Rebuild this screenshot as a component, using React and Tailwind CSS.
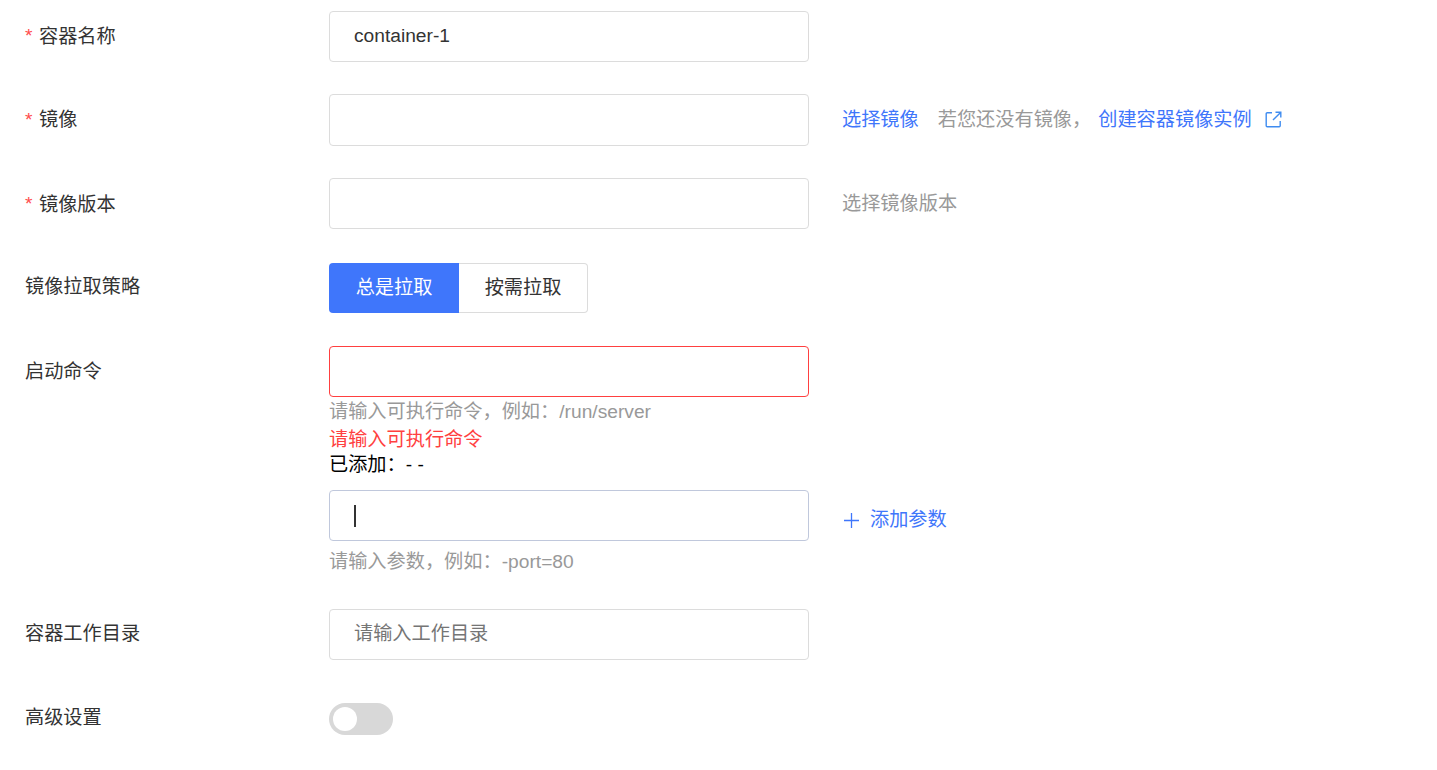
const fontStack = "font-['Liberation_Sans','Noto_Sans_CJK_SC',sans-serif]"

const Label = ({ required, className = "h-[51px] pt-[1px]", children }) => (
    <div className={`w-[304px] shrink-0 flex items-center text-[#333] ${className}`}>
        {required && <span className="w-[14px] text-[#ff4d4d] text-[19.2px] leading-none -mt-[2px]">*</span>}
        {children}
    </div>
)

const TextBox = ({ className = "border-[#dcdcdc] h-[51px]", children }) => (
    <div className={`w-[480px] border rounded-[4px] px-[24px] flex items-center bg-white ${className}`}>
        {children}
    </div>
)

const Hint = ({ className = "text-[#999]", children }) => (
    <div className={`h-[28px] leading-[30px] ${className}`}>{children}</div>
)

const App = () => {
    return (
        <div className={`${fontStack} h-[770px] overflow-hidden bg-white pl-[25px] pt-[11px] text-[19.2px]`}>
            <div className="flex mb-[32px]">
                <Label required>容器名称</Label>
                <TextBox><span className="text-[#333]">container-1</span></TextBox>
            </div>

            <div className="flex mb-[32px]">
                <Label required className="h-[51px] pt-[2px]">镜像</Label>
                <TextBox className="border-[#dcdcdc] h-[52px]" />
                <div className="ml-[33px] h-[52px] flex items-center">
                    <span className="text-[#3f76fb]">选择镜像</span>
                    <span className="ml-[19px] text-[#999]">若您还没有镜像，</span>
                    <span className="ml-[7px] text-[#3f76fb]">创建容器镜像实例</span>
                    <svg className="ml-[13px] -mt-[1px] text-[#3f8cf0]" width="17" height="17" viewBox="0 0 17 17" fill="none" stroke="currentColor" strokeWidth="1.4">
                        <path d="M7 1.7H2.2a1 1 0 0 0-1 1v12a1 1 0 0 0 1 1h12a1 1 0 0 0 1-1V10" />
                        <path d="M10.5 1.2h5.3v5.3M15.6 1.4L8 9" />
                    </svg>
                </div>
            </div>

            <div className="flex mb-[34px]">
                <Label required className="h-[51px] pt-[3px]">镜像版本</Label>
                <TextBox />
                <div className="ml-[33px] h-[51px] pt-[1px] flex items-center text-[#999]">选择镜像版本</div>
            </div>

            <div className="flex mb-[33px]">
                <Label className="h-[50px] pb-[2px]">镜像拉取策略</Label>
                <div className="flex h-[50px]">
                    <div className="w-[130px] rounded-l-[4px] bg-[#3f76fb] text-white flex items-center justify-center">总是拉取</div>
                    <div className="w-[129px] rounded-r-[4px] border border-l-0 border-[#dcdcdc] text-[#333] flex items-center justify-center">按需拉取</div>
                </div>
            </div>

            <div className="flex mb-[34px]">
                <Label>启动命令</Label>
                <div>
                    <TextBox className="border-[#ff4040] h-[51px]" />
                    <Hint>请输入可执行命令，例如：/run/server</Hint>
                    <Hint className="text-[#ff4040]">请输入可执行命令</Hint>
                    <div className="h-[24px] leading-[26px] -mt-[1px] text-black">已添加：- -</div>
                    <div className="flex mt-[14px]">
                        <TextBox className="border-[#c0c8dc] h-[51px]">
                            <span className="w-[2px] h-[22px] bg-[#333]" />
                        </TextBox>
                        <div className="ml-[33px] pt-[10px] flex items-center text-[#3f76fb]">
                            <svg className="ml-[2px] mr-[11px]" width="15" height="15" viewBox="0 0 15 15" fill="none" stroke="currentColor" strokeWidth="1.3">
                                <path d="M7.5 0v15M0 7.5h15" />
                            </svg>
                            添加参数
                        </div>
                    </div>
                    <Hint className="text-[#999] mt-[6px]">请输入参数，例如：-port=80</Hint>
                </div>
            </div>

            <div className="flex mb-[33px]">
                <Label className="h-[51px] pb-[1px]">容器工作目录</Label>
                <TextBox><span className="text-[#757575]">请输入工作目录</span></TextBox>
            </div>

            <div className="flex">
                <Label className="h-[51px] pb-[1px]">高级设置</Label>
                <div className="h-[51px] pt-[1px] flex items-center">
                    <div className="w-[64px] h-[32px] rounded-full bg-[#d8d8d8] flex items-center px-[4px]">
                        <div className="w-[24px] h-[24px] rounded-full bg-white" />
                    </div>
                </div>
            </div>
        </div>
    )
}

export default App
